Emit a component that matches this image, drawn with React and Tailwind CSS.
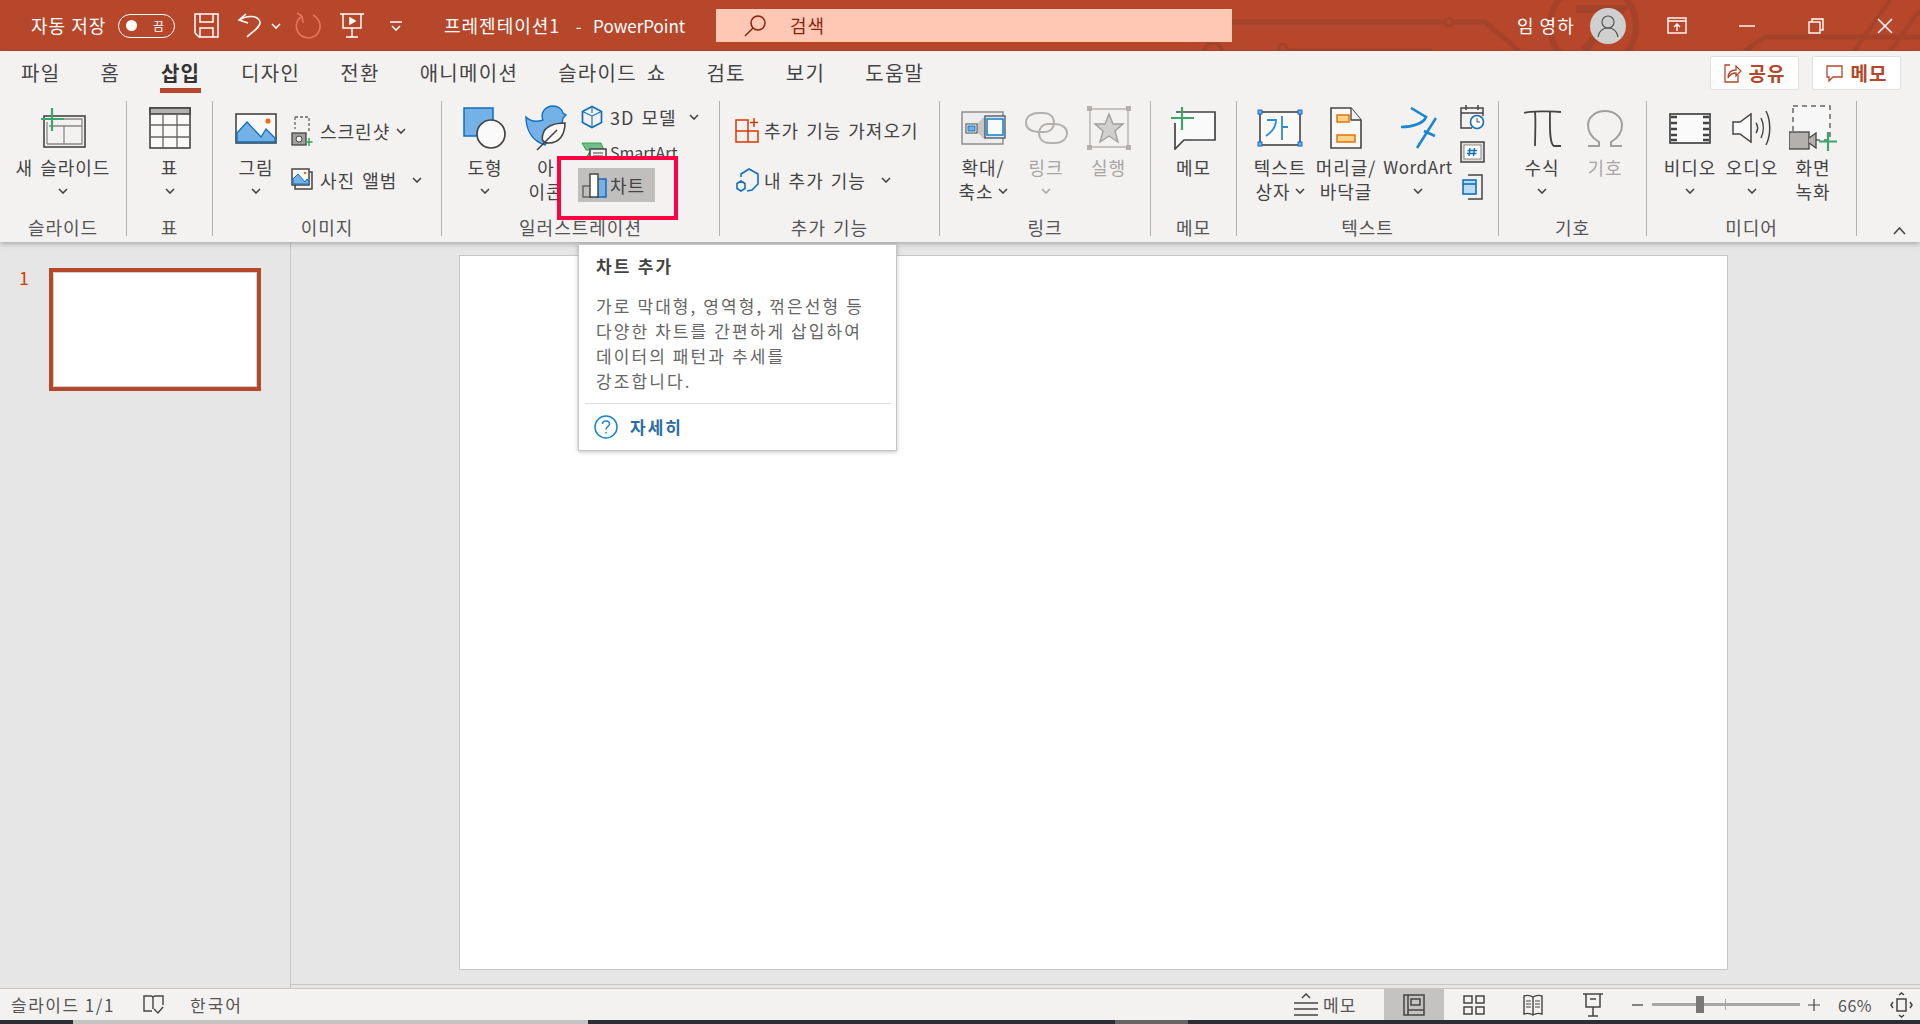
import React from "react";

const LABEL = "text-[18px] leading-[24px] tracking-[1px] [word-spacing:2px] text-[#444] whitespace-nowrap";
const DIM = "text-[18px] leading-[24px] tracking-[1px] text-[#a8a6a4] whitespace-nowrap";
const GROUP = "text-[18px] leading-[18px] tracking-[1px] [word-spacing:2px] text-[#555] whitespace-nowrap text-center pt-[1px]";

function Chev({ up, color = "#444", className = "" }) {
  return (
    <svg width="10" height="6" viewBox="0 0 10 6" className={className}>
      <path d={up ? "M1 5l4-4 4 4" : "M1 1l4 4 4-4"} fill="none" stroke={color} strokeWidth="1.6" />
    </svg>
  );
}

function Big({ w, icon, lines, chev, dim, wa }) {
  const cls = dim ? DIM : wa ? "text-[17px] leading-[24px] tracking-[0.6px] text-[#444] whitespace-nowrap" : LABEL;
  return (
    <div className={`flex flex-col items-center shrink-0 ${w}`}>
      <div className="h-[54px] flex items-center justify-center">{icon}</div>
      {lines.map((l, i) => (
        <div key={i} className={`${cls} flex items-center gap-1`}>{l}</div>
      ))}
      {chev && (
        <div className="h-[24px] flex items-center">
          <Chev color={dim ? "#a8a6a4" : "#444"} />
        </div>
      )}
    </div>
  );
}

function Group({ w, label, children, pl = "", last }) {
  return (
    <div className={`${w} h-[135px] shrink-0 flex flex-col ${last ? "" : "border-r border-[#b3b0ad]"}`}>
      <div className={`h-[117px] flex ${pl}`}>{children}</div>
      <div className={GROUP}>{label}</div>
    </div>
  );
}

const S = "#444";
const B = "#106ebe";
const F = "#73b1e6";

const NewSlide = () => (
  <svg width="45" height="41" viewBox="0 0 45 41" fill="none">
    <rect x="3" y="8" width="41" height="31" stroke={S} strokeWidth="1.6" />
    <path d="M6 36V14M6 36H41V11H16" stroke="#8a8886" strokeWidth="1.3" />
    <path d="M8 18H41M23 18V36" stroke="#8a8886" strokeWidth="1.3" />
    <path d="M11 0V23M0 11H23" stroke="#3aa66a" strokeWidth="2.2" />
  </svg>
);
const TableI = () => (
  <svg width="42" height="42" viewBox="0 0 42 42" fill="none">
    <rect x="1" y="1" width="40" height="40" fill="#faf9f8" stroke={S} strokeWidth="1.6" />
    <rect x="1" y="1" width="40" height="6" fill="#b3b0ad" stroke={S} strokeWidth="1.6" />
    <path d="M14 7V41M28 7V41M1 18H41M1 30H41" stroke="#666" strokeWidth="1.3" />
  </svg>
);
const Picture = () => (
  <svg width="42" height="31" viewBox="0 0 42 31" fill="none">
    <rect x="1" y="1" width="40" height="29" fill="#faf9f8" stroke={S} strokeWidth="1.6" />
    <path d="M2 29V20L12 9L26 24L31 16L40 25V29Z" fill={F} stroke={B} strokeWidth="1.3" />
    <circle cx="33" cy="8" r="2.6" fill="#e8710a" />
  </svg>
);
const Screenshot = () => (
  <svg width="22" height="32" viewBox="0 0 22 32" fill="none">
    <path d="M4 2H18V16M4 2V14" stroke="#666" strokeWidth="1.3" strokeDasharray="3 2" />
    <rect x="1" y="18" width="14" height="12" fill="#a19f9d" stroke={S} strokeWidth="1.3" />
    <circle cx="8" cy="24" r="3" fill="#f3f2f1" stroke={S} />
    <path d="M18 23V31M14.500 27H21.500" stroke="#2ea44f" strokeWidth="1.4" />
  </svg>
);
const Album = () => (
  <svg width="22" height="24" viewBox="0 0 22 24" fill="none">
    <rect x="4" y="4" width="17" height="17" stroke={S} strokeWidth="1.5" />
    <rect x="1" y="1" width="17" height="16" fill="#faf9f8" stroke={S} strokeWidth="1.5" />
    <path d="M2 16V11L7 6L14 14L16 11L18 14V16Z" fill={F} stroke={B} />
    <circle cx="14" cy="5" r="1.3" fill="#e8710a" />
  </svg>
);
const Shape = () => (
  <svg width="44" height="42" viewBox="0 0 44 42" fill="none">
    <path d="M1 1H30V18L13 29H1Z" fill={F} stroke={B} strokeWidth="1.5" />
    <ellipse cx="28" cy="27" rx="14" ry="14" fill="#fafafa" stroke={S} strokeWidth="1.7" />
  </svg>
);
const IconDuck = () => (
  <svg width="42" height="46" viewBox="0 0 42 46" fill="none">
    <path d="M1 12C6 17 12 17 18 15C15 8 20 1 28 1C33 1 37 4 38 8L41 10L38 13C38 16 37 18 36 20L20 40C8 36 1 26 1 12Z" fill={F} stroke={B} strokeWidth="1.4" />
    <path d="M40 18C30 18 20 21 18 29C16 35 18 38 24 38C34 38 40 30 40 18Z" fill="#fafafa" stroke={S} strokeWidth="1.6" />
    <path d="M12 45L32 25" stroke={S} strokeWidth="1.6" />
  </svg>
);
const Cube = () => (
  <svg width="22" height="24" viewBox="0 0 22 24" fill="none">
    <path d="M11 1.500L20.500 6.500V17.500L11 22.500L1.500 17.500V6.500Z" stroke={B} strokeWidth="1.7" />
    <path d="M11 22V11M1.500 6.500L11 11L20.500 6.500M11 8V1.500" stroke={B} strokeWidth="1.1" fill="none" />
  </svg>
);
const SmartArtI = () => (
  <svg width="27" height="20" viewBox="0 0 27 20" fill="none">
    <path d="M1 1H20L23 8H5Z" fill="#6fbf8b" stroke="#2ea44f" />
    <path d="M1 15H6L10 8" stroke="#2ea44f" strokeWidth="1.5" />
    <rect x="9" y="7" width="16" height="12" fill="#f3f2f1" stroke={S} strokeWidth="1.5" />
    <path d="M12 11H22M12 14H22" stroke={S} />
  </svg>
);
const ChartI = () => (
  <svg width="25" height="25" viewBox="0 0 25 25" fill="none">
    <rect x="1" y="13" width="9" height="11" stroke="#666" strokeWidth="1.5" />
    <rect x="14" y="6" width="10" height="18" fill={F} stroke={B} strokeWidth="1.5" />
    <rect x="8" y="1" width="8" height="23" fill="#fff" stroke={S} strokeWidth="1.5" />
  </svg>
);
const GetAddin = () => (
  <svg width="24" height="26" viewBox="0 0 24 26" fill="none" stroke="#d83b01" strokeWidth="1.5">
    <path d="M1 3H13V25H1ZM1 14H23V25H13" />
    <path d="M19 1V10M15 5.500H23" />
  </svg>
);
const MyAddin = () => (
  <svg width="24" height="25" viewBox="0 0 24 25" fill="none" stroke={B} strokeWidth="1.6">
    <path d="M6 9V6L14 1L23 6V16L17 22L12 23" />
    <path d="M6 13L10 15.500V20.500L6 23L2 20.500V15.500Z" />
  </svg>
);
const ZoomI = () => (
  <svg width="45" height="34" viewBox="0 0 45 34" fill="none">
    <rect x="1" y="1" width="41" height="32" fill="#eeeded" stroke="#8a8886" strokeWidth="1.4" />
    <path d="M16 13L24 5V29L16 21Z" fill="#c8c6c4" />
    <rect x="5" y="13" width="11" height="9" fill="#fff" stroke={S} />
    <rect x="7" y="15" width="7" height="5" fill={F} stroke={B} />
    <rect x="24" y="5" width="20" height="22" fill="#dcebf7" stroke={S} strokeWidth="1.2" />
    <rect x="26" y="8" width="16" height="16" fill="#fafafa" stroke="#1a86d0" strokeWidth="1.6" />
  </svg>
);
const LinkI = () => (
  <svg width="43" height="32" viewBox="0 0 43 32" fill="none" stroke="#b3b0ad" strokeWidth="2">
    <path d="M20 20H13C6 20 1 16 1 11C1 5 6 1 13 1H18C25 1 29 5 29 11C29 16 25 20 20 20" />
    <path d="M23 12H30C37 12 42 16 42 21C42 27 37 31 30 31H25C18 31 14 27 14 21C14 16 18 12 23 12" />
  </svg>
);
const ActionI = () => (
  <svg width="44" height="44" viewBox="0 0 44 44" fill="none">
    <rect x="3" y="3" width="38" height="38" stroke="#b3b0ad" strokeWidth="1.4" />
    <g fill="#b3b0ad">
      <rect x="0" y="0" width="5" height="5" /><rect x="39" y="0" width="5" height="5" />
      <rect x="0" y="39" width="5" height="5" /><rect x="39" y="39" width="5" height="5" />
    </g>
    <path d="M22 8L26 18H36L28 25L31 36L22 30L13 36L16 25L8 18H18Z" fill="#d2d0ce" stroke="#a19f9d" strokeWidth="1.4" />
  </svg>
);
const MemoI = () => (
  <svg width="45" height="43" viewBox="0 0 45 43" fill="none">
    <path d="M5 5H44V33H13L4 42V16" fill="#fafafa" stroke={S} strokeWidth="1.7" />
    <path d="M11 0V23M0 11H23" stroke="#3aa66a" strokeWidth="2.2" />
  </svg>
);
const TextBoxI = () => (
  <svg width="46" height="38" viewBox="0 0 46 38" fill="none">
    <rect x="3" y="3" width="40" height="33" fill="#faf9f8" stroke={S} strokeWidth="1.6" />
    <g fill={F} stroke={B}>
      <rect x="1" y="1" width="4" height="4" /><rect x="41" y="1" width="4" height="4" />
      <rect x="1" y="33" width="4" height="4" /><rect x="41" y="33" width="4" height="4" />
    </g>
    <path d="M10 11H19C19 18 15 23 9 27M25 7V31M25 18H31" stroke="#2b8bd6" strokeWidth="1.8" />
  </svg>
);
const HeaderI = () => (
  <svg width="32" height="42" viewBox="0 0 32 42" fill="none">
    <path d="M1 1H21L31 13V41H1Z" fill="#faf9f8" stroke={S} strokeWidth="1.6" />
    <path d="M21 1V13H31" fill="#f3f2f1" stroke={S} strokeWidth="1.3" />
    <rect x="7" y="8" width="12" height="7" fill="#f8d58c" stroke="#e8710a" strokeWidth="1.5" />
    <rect x="7" y="28" width="18" height="7" fill="#f8d58c" stroke="#e8710a" strokeWidth="1.5" />
  </svg>
);
const WordArtI = () => (
  <svg width="37" height="42" viewBox="0 0 37 42" fill="none" stroke="#1a86d0" strokeWidth="2.6">
    <path d="M11 1L26 10C24 16 13 20 1 20" />
    <path d="M36 11L17 41M24 24L35 29" />
  </svg>
);
const DateI = () => (
  <svg width="26" height="26" viewBox="0 0 26 26" fill="none">
    <path d="M13 24H2V4H24V12M2 9H24M7 1V6M19 1V6" stroke={S} strokeWidth="1.5" />
    <circle cx="18" cy="18" r="6.500" fill="#fff" stroke={B} strokeWidth="1.6" />
    <path d="M18 14V18H21" stroke={S} />
  </svg>
);
const SlideNoI = () => (
  <svg width="25" height="22" viewBox="0 0 25 22" fill="none">
    <rect x="1" y="1" width="23" height="20" fill="#e1dfdd" stroke={S} strokeWidth="1.5" />
    <rect x="4" y="4" width="17" height="14" fill="#fff" stroke="#8a8886" />
    <path d="M10 7L9 15M14.500 7L13.500 15M7.500 9.500H17M7 12.500H16.500" stroke={B} strokeWidth="1.4" />
  </svg>
);
const ObjI = () => (
  <svg width="21" height="26" viewBox="0 0 21 26" fill="none">
    <path d="M6 1H20V25H6" stroke={S} strokeWidth="1.5" />
    <rect x="1" y="6" width="13" height="14" fill="#bcdcf5" stroke={B} strokeWidth="1.6" />
    <path d="M1 10H14" stroke={B} strokeWidth="1.6" />
  </svg>
);
const PiI = () => (
  <svg width="37" height="37" viewBox="0 0 37 37" fill="none" stroke={S} strokeWidth="1.8">
    <path d="M0 3C4 1 30 1 37 2" />
    <path d="M11 2C12 12 11 26 11 36M26 2C26 14 25 34 30 36H37" />
  </svg>
);
const OmegaI = () => (
  <svg width="36" height="37" viewBox="0 0 36 37" fill="none" stroke="#a19f9d" strokeWidth="2">
    <path d="M1 36H12V32C5 28 1 22 1 15C1 7 9 1 18 1C27 1 35 7 35 15C35 22 31 28 24 32V36H35" />
  </svg>
);
const VideoI = () => (
  <svg width="42" height="31" viewBox="0 0 42 31" fill="none">
    <rect x="1" y="1" width="40" height="29" fill="#fafafa" stroke={S} strokeWidth="1.7" />
    <path d="M2 4H8M2 10H8M2 16H8M2 22H8M2 27H8M34 4H40M34 10H40M34 16H40M34 22H40M34 27H40" stroke={S} strokeWidth="2.400" />
  </svg>
);
const AudioI = () => (
  <svg width="40" height="38" viewBox="0 0 40 38" fill="none" stroke={S} strokeWidth="1.5">
    <path d="M1 13H8L19 5V33L8 25H1Z" fill="#fafafa" />
    <path d="M24 14C26 17 26 21 24 24M29 9C32 15 32 23 29 29M34 2C39 12 39 26 34 36" />
  </svg>
);
const RecordI = () => (
  <svg width="48" height="46" viewBox="0 0 48 46" fill="none">
    <rect x="4" y="1" width="37" height="34" fill="#f7f7f7" stroke="#666" strokeWidth="1.5" strokeDasharray="5 4" />
    <rect x="0" y="27" width="20" height="17" fill="#b3b0ad" stroke={S} strokeWidth="1.3" />
    <path d="M20 33L27 28V43L20 38" fill="#b3b0ad" stroke={S} strokeWidth="1.3" />
    <path d="M39 27V46M30 36.500H48" stroke="#3aa66a" strokeWidth="2.2" />
  </svg>
);

const W = "#ffffff";
const TitleIcons = {
  Save: () => (
    <svg width="25" height="25" viewBox="0 0 25 25" fill="none" stroke={W} strokeWidth="1.5">
      <path d="M1 1H24V24H5L1 20Z" />
      <path d="M6 1V9H19V1M6 24V15H19V24" />
    </svg>
  ),
  Undo: () => (
    <svg width="24" height="25" viewBox="0 0 24 25" fill="none" stroke={W} strokeWidth="1.6">
      <path d="M8 1L1 7L10 10M1 7C9 2 20 2 22 9C23 14 14 19 9 24" />
    </svg>
  ),
  Redo: () => (
    <svg width="26" height="27" viewBox="0 0 26 27" fill="none" stroke="#e5735a" strokeWidth="1.7">
      <path d="M7 4C1 8 0 15 3 20C7 27 18 28 23 21C27 15 25 7 18 3M7 4L2 1M7 4L8 11" />
    </svg>
  ),
  Present: () => (
    <svg width="24" height="25" viewBox="0 0 24 25" fill="none" stroke={W} strokeWidth="1.5">
      <path d="M0 1H24M3 1V15H21V1M12 15V24M6 24H18" />
      <path d="M10 5L15 8L10 11Z" fill={W} />
    </svg>
  ),
  Drop: () => (
    <svg width="12" height="10" viewBox="0 0 12 10" fill="none" stroke={W} strokeWidth="1.5">
      <path d="M0 1H12M2 5L6 9L10 5" />
    </svg>
  ),
};

function Circuit() {
  return (
    <svg className="absolute inset-0 w-[1920px] h-[51px]" viewBox="0 0 1920 51" fill="none" stroke="#a5432a">
      <path d="M1232 22H1445M1453 22H1485L1519 51" strokeWidth="5" />
      <circle cx="1449" cy="22" r="4" strokeWidth="3" />
      <circle cx="1283" cy="48" r="4" strokeWidth="3" />
      <path d="M1288 50H1432" strokeWidth="3" />
      <circle cx="1593" cy="26" r="43" strokeWidth="6" />
      <path d="M1576 9H1622L1584 50" strokeWidth="8" />
      <path d="M1920 37H1765L1745 51" strokeWidth="5" />
      <path d="M1890 0L1854 51M1920 10L1890 51" strokeWidth="4" />
      <circle cx="1213" cy="52" r="9" strokeWidth="4" />
    </svg>
  );
}

const TITLE_TXT = "text-[18px] tracking-[1px] whitespace-nowrap";

function TitleBar() {
  return (
    <div className="relative h-[51px] bg-[#b7472a] flex items-center shrink-0 text-white">
      <Circuit />
      <div className="relative flex items-center w-full">
        <div className={`ml-[31px] w-[87px] ${TITLE_TXT}`}>자동 저장</div>
        <div className="w-[57px] h-[24px] rounded-full border border-white flex items-center justify-between pl-[7px] pr-[10px]">
          <div className="w-[11px] h-[11px] rounded-full bg-white" />
          <span className="text-[12px]">끔</span>
        </div>
        <div className="ml-[19px] flex"><TitleIcons.Save /></div>
        <div className="ml-[19px] flex"><TitleIcons.Undo /></div>
        <div className="ml-[9px] flex"><Chev color="#fff" /></div>
        <div className="ml-[14px] flex"><TitleIcons.Redo /></div>
        <div className="ml-[19px] flex"><TitleIcons.Present /></div>
        <div className="ml-[26px] flex"><TitleIcons.Drop /></div>
        <div className="ml-[42px] w-[272px] whitespace-pre flex items-center">
          <span className="text-[18px] tracking-[1px]">프레젠테이션1</span>
          <span className="text-[17px] ml-[4px]">{"   -   PowerPoint"}</span>
        </div>
        <div className="w-[516px] h-[33px] bg-[#ffc8b4] flex items-center text-[#8a1f0a]">
          <svg width="22" height="22" viewBox="0 0 22 22" fill="none" stroke="#8a1f0a" strokeWidth="1.5" className="ml-[28px]">
            <circle cx="14" cy="8" r="7" />
            <path d="M9 13L1 21" />
          </svg>
          <span className={`ml-[24px] ${TITLE_TXT}`}>검색</span>
        </div>
        <div className={`ml-[285px] w-[58px] ${TITLE_TXT}`}>임 영하</div>
        <div className="ml-[15px] w-[36px] h-[36px] rounded-full bg-[#cfcfcf] flex items-center justify-center">
          <svg width="22" height="24" viewBox="0 0 22 24" fill="none" stroke="#555" strokeWidth="1.2">
            <circle cx="11" cy="8" r="6" />
            <path d="M1 23C2 17 6 14 11 14C16 14 20 17 21 23" />
          </svg>
        </div>
        <svg width="20" height="17" viewBox="0 0 20 17" fill="none" stroke={W} strokeWidth="1.4" className="ml-[41px]">
          <rect x="1" y="1" width="18" height="15" />
          <path d="M1 4H19M10 14V7M7 10L10 7L13 10" />
        </svg>
        <svg width="16" height="2" viewBox="0 0 16 2" className="ml-[52px]"><path d="M0 1H16" stroke={W} strokeWidth="1.4" /></svg>
        <svg width="16" height="16" viewBox="0 0 16 16" fill="none" stroke={W} strokeWidth="1.4" className="ml-[53px]">
          <rect x="1" y="4" width="11" height="11" />
          <path d="M4 4V1H15V12H12" />
        </svg>
        <svg width="16" height="16" viewBox="0 0 16 16" fill="none" stroke={W} strokeWidth="1.5" className="ml-[53px]">
          <path d="M1 1L15 15M15 1L1 15" />
        </svg>
      </div>
    </div>
  );
}

const TABS = ["파일", "홈", "삽입", "디자인", "전환", "애니메이션", "슬라이드 쇼", "검토", "보기", "도움말"];

function Tabs() {
  return (
    <div className="h-[50px] flex items-start pl-[21px]">
      <div className="flex gap-[40px] pt-[10px]">
        {TABS.map((t) => (
          <div key={t} className="flex flex-col items-center">
            <div className={t === "삽입" ? "text-[20px] leading-[24px] tracking-[1.3px] [word-spacing:4px] text-[#333] font-bold whitespace-nowrap" : "text-[20px] leading-[24px] tracking-[1.3px] [word-spacing:4px] text-[#444] whitespace-nowrap"}>{t}</div>
            {t === "삽입" && <div className="mt-[3px] w-[41px] h-[5px] bg-[#b7472a]" />}
          </div>
        ))}
      </div>
      <div className="ml-auto mr-[19px] mt-[5px] flex gap-[13px]">
        <div className="w-[89px] h-[34px] bg-white rounded-[2px] border border-[#e1dfdd] flex items-center justify-center gap-[7px] text-[#b7472a]">
          <svg width="18" height="20" viewBox="0 0 18 20" fill="none" stroke="#b7472a" strokeWidth="1.3">
            <path d="M6 2H1V19H14V12" />
            <path d="M4 15C4 10 7 7 12 7V3L17 8L12 13V10C9 10 6 11 4 15Z" />
          </svg>
          <span className="text-[19px] font-bold tracking-[1px]">공유</span>
        </div>
        <div className="w-[89px] h-[34px] bg-white rounded-[2px] border border-[#e1dfdd] flex items-center justify-center gap-[8px] text-[#b7472a]">
          <svg width="17" height="17" viewBox="0 0 17 17" fill="none" stroke="#b7472a" strokeWidth="1.3">
            <path d="M1 1H16V12H7L3 16V12H1Z" />
          </svg>
          <span className="text-[19px] font-bold tracking-[1px]">메모</span>
        </div>
      </div>
    </div>
  );
}

function SideRow({ icon, text, gap, chevGap, rowClass = "" }) {
  return (
    <div className={`flex items-center h-[30px] ${rowClass}`}>
      <div className="w-[22px] flex justify-center shrink-0">{icon}</div>
      <div className={`${LABEL} ${gap}`}>{text}</div>
      <Chev className={chevGap} />
    </div>
  );
}

function Ribbon() {
  return (
    <div className="relative z-10 h-[191px] shrink-0 bg-[#f3f2f1] shadow-[0_2px_5px_rgba(0,0,0,0.25)] flex flex-col">
      <Tabs />
      <div className="flex">
        <Group w="w-[127px]" label="슬라이드">
          <Big w="w-full" icon={<NewSlide />} lines={["새 슬라이드"]} chev />
        </Group>
        <Group w="w-[86px]" label="표">
          <Big w="w-full" icon={<TableI />} lines={["표"]} chev />
        </Group>
        <Group w="w-[229px]" label="이미지" pl="pl-[13px]">
          <Big w="w-[60px]" icon={<Picture />} lines={["그림"]} chev />
          <div className="ml-[5px] pt-[15px] flex flex-col gap-[19px]">
            <SideRow icon={<Screenshot />} text="스크린샷" gap="ml-[7px]" chevGap="ml-[6px]" />
            <SideRow icon={<Album />} text="사진 앨범" gap="ml-[7px]" chevGap="ml-[15px]" />
          </div>
        </Group>
        <Group w="w-[278px]" label="일러스트레이션" pl="pl-[12px]">
          <Big w="w-[62px]" icon={<Shape />} lines={["도형"]} chev />
          <Big w="w-[60px]" icon={<IconDuck />} lines={["아", "이콘"]} />
          <div className="ml-[5px] pt-[1px] flex flex-col gap-[5px]">
            <SideRow icon={<Cube />} text="3D 모델" gap="ml-[7px]" chevGap="ml-[12px]" />
            <div className="flex items-center h-[30px]">
              <SmartArtI />
              <span className="text-[16px] text-[#444] ml-[2px]">SmartArt</span>
            </div>
          </div>
        </Group>
        <Group w="w-[220px]" label="추가 기능" pl="pl-[15px]">
          <div className="pt-[14px] flex flex-col gap-[20px]">
            <div className="flex items-center h-[30px]"><GetAddin /><span className={`${LABEL} ml-[5px]`}>추가 기능 가져오기</span></div>
            <div className="flex items-center h-[30px]"><MyAddin /><span className={`${LABEL} ml-[5px]`}>내 추가 기능</span><Chev className="ml-[15px]" /></div>
          </div>
        </Group>
        <Group w="w-[211px]" label="링크" pl="pl-[11px]">
          <Big w="w-[64px]" icon={<ZoomI />} lines={["확대/", <>축소 <Chev /></>]} />
          <Big w="w-[62px]" icon={<LinkI />} lines={["링크"]} chev dim />
          <Big w="w-[63px]" icon={<ActionI />} lines={["실행"]} dim />
        </Group>
        <Group w="w-[86px]" label="메모">
          <Big w="w-full" icon={<MemoI />} lines={["메모"]} />
        </Group>
        <Group w="w-[262px]" label="텍스트" pl="pl-[10px]">
          <Big w="w-[66px]" icon={<TextBoxI />} lines={["텍스트", <>상자 <Chev /></>]} />
          <Big w="w-[66px]" icon={<HeaderI />} lines={["머리글/", "바닥글"]} />
          <Big w="w-[78px]" icon={<WordArtI />} lines={["WordArt"]} chev wa />
          <div className="w-[30px] flex flex-col items-center pt-[3px] gap-[11px]">
            <DateI />
            <SlideNoI />
            <ObjI />
          </div>
        </Group>
        <Group w="w-[148px]" label="기호" pl="pl-[12px]">
          <Big w="w-[62px]" icon={<PiI />} lines={["수식"]} chev />
          <Big w="w-[64px]" icon={<OmegaI />} lines={["기호"]} dim />
        </Group>
        <Group w="w-[210px]" label="미디어" pl="pl-[12px]">
          <Big w="w-[62px]" icon={<VideoI />} lines={["비디오"]} chev />
          <Big w="w-[62px]" icon={<AudioI />} lines={["오디오"]} chev />
          <Big w="w-[60px]" icon={<RecordI />} lines={["화면", "녹화"]} />
        </Group>
        <div className="flex-1 flex items-end justify-end pr-[14px] pb-[1px]">
          <svg width="13" height="8" viewBox="0 0 13 8" fill="none" stroke="#444" strokeWidth="1.6"><path d="M1 7L6.500 1L12 7" /></svg>
        </div>
      </div>
    </div>
  );
}

function Main() {
  return (
    <div className="flex flex-1 min-h-0 bg-[#e6e6e6]">
      <div className="w-[291px] shrink-0 border-r border-[#c8c6c4] flex items-start pt-[24px]">
        <div className="w-[49px] pl-[19px] text-[18px] leading-[22px] text-[#d83b01]">1</div>
        <div className="mt-[2px] w-[212px] h-[123px] border-4 border-[#b7472a] bg-white shadow-[inset_0_0_0_1px_#d0d0d0]" />
      </div>
      <div className="flex-1 pb-[3px] flex flex-col">
        <div className="flex-1 border-b border-[#c8c6c4] pl-[168px] pt-[13px]">
          <div className="w-[1269px] h-[715px] bg-white border border-[#c8c6c4]" />
        </div>
      </div>
    </div>
  );
}

function StatusBar() {
  const sv = "#444";
  return (
    <div className="h-[32px] shrink-0 bg-[#f3f2f1] border-t border-[#c8c6c4] flex items-center text-[#555]">
      <span className="ml-[11px] w-[132px] text-[17px] tracking-[1.5px] whitespace-nowrap">슬라이드 1/1</span>
      <svg width="21" height="20" viewBox="0 0 21 20" fill="none" stroke={sv} strokeWidth="1.4">
        <path d="M9 16H1V1H8C9 1 10 2 10 3V14M10 3C10 2 11 1 12 1H20V10" />
        <path d="M11 14L15 18L20 12" />
      </svg>
      <span className="ml-[26px] text-[17px] tracking-[2px] whitespace-nowrap">한국어</span>
      <div className="ml-auto flex items-center h-full">
        <svg width="24" height="24" viewBox="0 0 24 24" fill="none" stroke={sv} strokeWidth="1.5">
          <path d="M8 5L12 1L16 5M0 10H24M0 16H24M0 22H24" />
        </svg>
        <span className="ml-[5px] w-[61px] text-[17px] tracking-[1px]">메모</span>
        <div className="w-[60px] h-full bg-[#c4c3c1] flex items-center justify-center">
          <svg width="22" height="22" viewBox="0 0 22 22" fill="none" stroke={sv} strokeWidth="1.5">
            <rect x="1" y="1" width="20" height="20" />
            <path d="M5 1V21M5 16H21" />
            <rect x="8" y="5" width="9" height="6" />
          </svg>
        </div>
        <svg width="22" height="20" viewBox="0 0 22 20" fill="none" stroke={sv} strokeWidth="1.5" className="ml-[19px]">
          <rect x="1" y="1" width="8" height="7" /><rect x="13" y="1" width="8" height="7" />
          <rect x="1" y="12" width="8" height="7" /><rect x="13" y="12" width="8" height="7" />
        </svg>
        <svg width="20" height="24" viewBox="0 0 20 24" fill="none" stroke={sv} strokeWidth="1.4" className="ml-[38px]">
          <path d="M10 4C7 2 4 2 1 3V21C4 20 7 20 10 22C13 20 16 20 19 21V3C16 2 13 2 10 4V22" />
          <path d="M3 8H8M3 11H8M3 14H8M12 8H17M12 11H17M12 14H17" strokeWidth="1" />
        </svg>
        <svg width="20" height="24" viewBox="0 0 20 24" fill="none" stroke={sv} strokeWidth="1.5" className="ml-[40px]">
          <path d="M0 1H20M3 1V14H17V1M10 14V23M5 23H15M7 6H13" />
        </svg>
        <svg width="11" height="2" viewBox="0 0 11 2" className="ml-[29px]"><path d="M0 1H11" stroke={sv} strokeWidth="1.3" /></svg>
        <div className="ml-[9px] w-[148px] h-[3px] bg-[#a8a6a4] relative">
          <div className="absolute left-[44px] top-[-7px] w-[8px] h-[17px] bg-[#7a7876]" />
          <div className="absolute left-[73px] top-[-4px] w-[1px] h-[11px] bg-[#a8a6a4]" />
        </div>
        <svg width="12" height="12" viewBox="0 0 12 12" className="ml-[8px]"><path d="M0 6H12M6 0V12" stroke={sv} strokeWidth="1.2" /></svg>
        <span className="ml-[18px] w-[52px] text-[16px] tracking-[0.5px] whitespace-nowrap">66%</span>
        <svg width="23" height="26" viewBox="0 0 23 26" fill="none" stroke={sv} strokeWidth="1.5" className="mr-[7px]">
          <rect x="7" y="7" width="9" height="12" />
          <path d="M9 3L11.500 1L14 3M9 23L11.500 25L14 23M3 10L1 13L3 16M20 10L22 13L20 16" />
        </svg>
      </div>
    </div>
  );
}

function TaskStrip() {
  return (
    <div className="h-[4px] shrink-0 flex bg-[#2b2f33]">
      <div className="w-[73px]" />
      <div className="w-[515px] bg-[#c4c4c4]" />
      <div className="w-[527px]" />
      <div className="w-[73px] bg-[#666666]" />
    </div>
  );
}

export default function App() {
  return (
    <div className="relative w-[1920px] h-[1024px] overflow-hidden flex flex-col font-['Noto_Sans_CJK_KR','Noto_Sans',sans-serif] bg-[#e6e6e6]">
      <TitleBar />
      <Ribbon />
      <Main />
      <StatusBar />
      <TaskStrip />

      <div className="absolute z-20 left-[557px] top-[156px] w-[121px] h-[64px] border-4 border-[#ff0040] bg-[#f3f2f1] pl-[17px] pt-[8px]">
        <div className="w-[77px] h-[34px] bg-[#c0bfbd] flex items-center pl-[4px]">
          <ChartI />
          <span className="ml-[3px] text-[18px] tracking-[1px] text-[#444]">차트</span>
        </div>
      </div>

      <div className="absolute z-20 left-[578px] top-[244px] w-[319px] h-[207px] bg-white border border-[#c8c6c4] shadow-[0_1px_4px_rgba(0,0,0,0.25)] pl-[17px] pr-[16px] pt-[7px] text-[#555]">
        <div className="text-[17px] leading-[28px] font-bold tracking-[2.2px] text-[#444]">차트 추가</div>
        <div className="mt-[13px] text-[17px] leading-[25px] tracking-[2.1px] text-[#666] whitespace-nowrap">
          <div>가로 막대형, 영역형, 꺾은선형 등</div>
          <div>다양한 차트를 간편하게 삽입하여</div>
          <div>데이터의 패턴과 추세를</div>
          <div>강조합니다.</div>
        </div>
        <div className="mt-[10px] -mx-[11px] border-t border-[#e1dfdd]" />
        <div className="mt-[10px] flex items-center">
          <svg width="24" height="24" viewBox="0 0 24 24" fill="none" stroke="#1a86d0" strokeWidth="1.5" className="-ml-[2px]">
            <circle cx="12" cy="12" r="11" />
            <path d="M8.500 9C8.500 7 10 6 12 6C14 6 15.500 7.200 15.500 9C15.500 11.500 12 11.500 12 14.500M12 17V18.500" />
          </svg>
          <span className="ml-[12px] text-[17px] font-bold tracking-[2px] text-[#2b6ca3]">자세히</span>
        </div>
      </div>
    </div>
  );
}
